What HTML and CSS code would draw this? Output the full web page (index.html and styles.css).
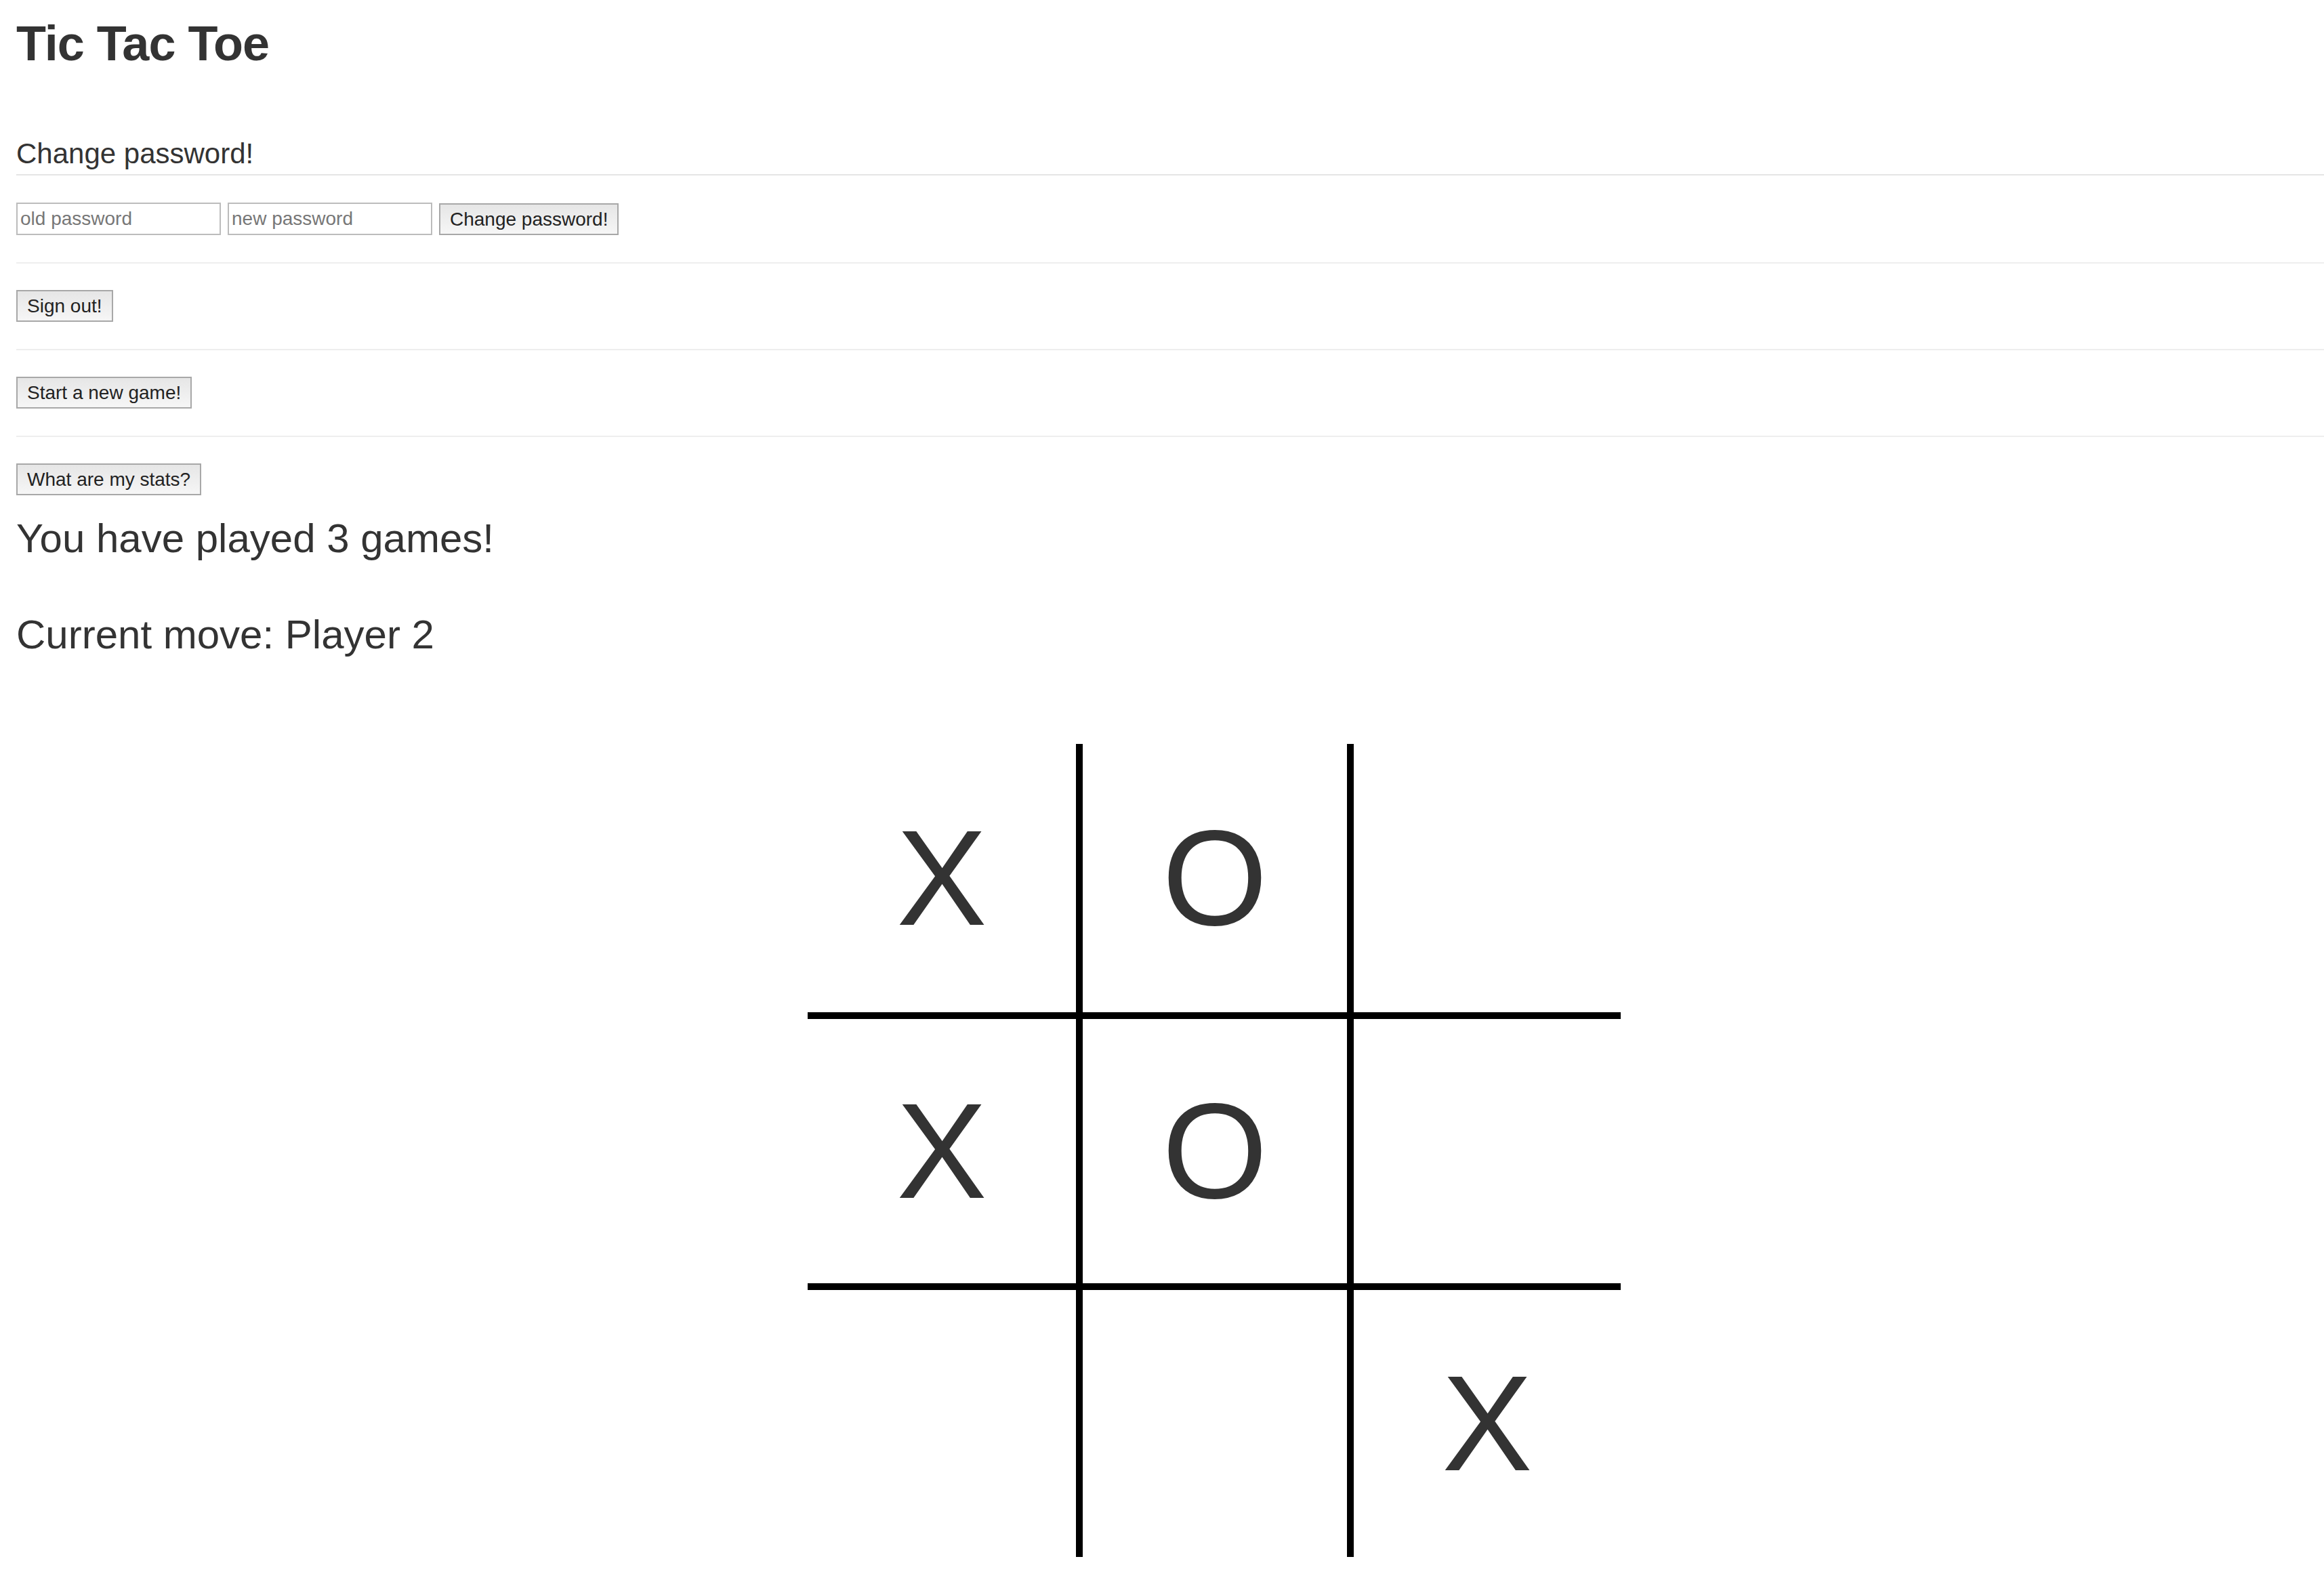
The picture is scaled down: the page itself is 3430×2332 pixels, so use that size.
FILE: index.html
```html
<!DOCTYPE html>
<html lang="en">
<head>
<meta charset="utf-8">
<title>Tic Tac Toe</title>
<link rel="stylesheet" href="styles.css">
</head>
<body>
<div class="page">
  <h1 class="title">Tic Tac Toe</h1>

  <form class="pw-form">
    <fieldset class="pw-fieldset">
      <legend class="pw-legend">Change password!</legend>
      <div class="pw-row">
        <input class="field" type="password" placeholder="old password">
        <input class="field" type="password" placeholder="new password">
        <button class="btn" type="button">Change password!</button>
      </div>
    </fieldset>
  </form>

  <hr class="rule">
  <div class="action"><button class="btn" type="button">Sign out!</button></div>
  <hr class="rule">
  <div class="action"><button class="btn" type="button">Start a new game!</button></div>
  <hr class="rule">
  <div class="action"><button class="btn" type="button">What are my stats?</button></div>

  <h2 class="stats">You have played 3 games!</h2>
  <h2 class="current">Current move: Player 2</h2>

  <div class="board">
    <div class="cell">X</div>
    <div class="cell">O</div>
    <div class="cell"></div>
    <div class="cell">X</div>
    <div class="cell">O</div>
    <div class="cell"></div>
    <div class="cell"></div>
    <div class="cell"></div>
    <div class="cell">X</div>
  </div>
</div>
</body>
</html>
```

FILE: styles.css
```css
* { box-sizing: border-box; }

html, body {
  margin: 0;
  padding: 0;
  background: #fff;
}

body {
  font-family: "Liberation Sans", Arial, sans-serif;
  font-size: 28px;
  line-height: 1.42857;
  color: #333;
}

.page {
  padding: 0 0 40px 24px;
}

.title {
  font-size: 72px;
  line-height: 79px;
  font-weight: 700;
  letter-spacing: -1px;
  margin: 25px 0 0;
}

.pw-form {
  margin: 93px 0 0;
}

.pw-fieldset {
  border: 0;
  margin: 0;
  padding: 0;
  min-width: 0;
}

.pw-legend {
  display: block;
  width: 100%;
  padding: 0;
  margin: 0 0 40px;
  font-size: 42px;
  line-height: 60px;
  color: #333;
  border-bottom: 2px solid #e5e5e5;
}

.pw-row {
  display: flex;
  align-items: flex-start;
  gap: 10px;
  height: 48px;
}

.field {
  width: 302px;
  height: 48px;
  border: 2px solid #bcbcbc;
  padding: 0 4px;
  font-family: "Liberation Sans", Arial, sans-serif;
  font-size: 28px;
  color: #333;
  background: #fff;
  outline: none;
}

.field::placeholder {
  color: #777;
}

.btn {
  height: 47px;
  margin-top: 1px;
  padding: 0 14px;
  border: 2px solid #a8a8a8;
  border-radius: 0;
  background: linear-gradient(#e6e6e6, #f6f6f6);
  font-family: "Liberation Sans", Arial, sans-serif;
  font-size: 28px;
  line-height: 1;
  color: #222;
}

.action .btn { margin-top: 0; }

.action {
  height: 47px;
}

.rule {
  margin: 40px 0 39px;
  border: 0;
  border-top: 2px solid #eee;
  height: 0;
}

.stats,
.current {
  font-size: 60px;
  line-height: 66px;
  font-weight: 500;
}

.stats { margin: 31px 0 0; }
.current { margin: 76px 0 0; }

.board {
  display: grid;
  grid-template-columns: 396px 390px 394px;
  grid-template-rows: 396px 390px 394px;
  gap: 10px;
  width: 1200px;
  margin: 128px 0 0 1168px;
  background: #000;
}

.cell {
  background: #fff;
  display: flex;
  align-items: center;
  justify-content: center;
  font-size: 200px;
  line-height: 1;
  color: #333;
}
```
